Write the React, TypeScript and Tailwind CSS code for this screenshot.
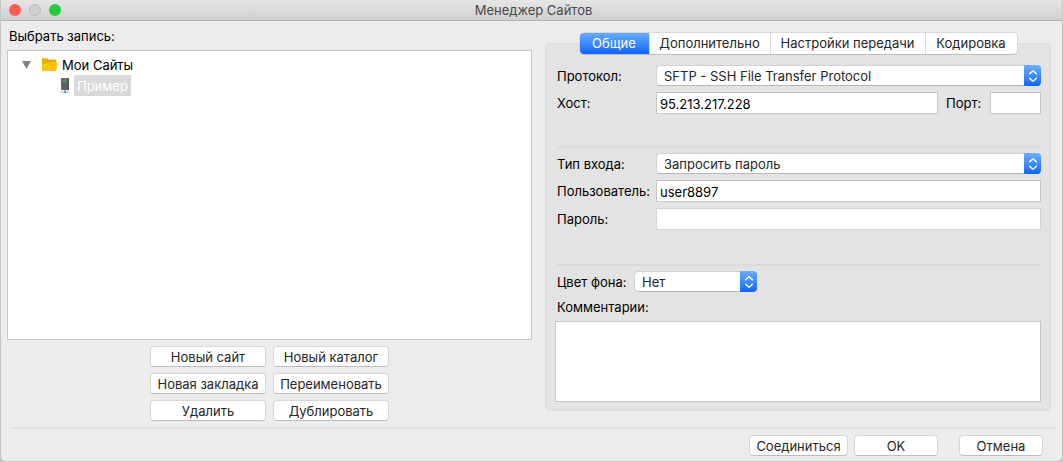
import React from "react";

const pushButton =
  "h-[21px] rounded-[4px] bg-white text-center text-[13px] leading-[20px] text-[#262626] border border-[#d6d6d6] border-b-[#bcbcbc] whitespace-nowrap";

const textField =
  "h-[22px] min-w-0 border bg-white px-[3px] pt-[2px] text-[13px] leading-[18px] text-black outline-none";

function Chevrons() {
  return (
    <span className="pointer-events-none absolute inset-y-0 right-0 flex w-[17px] items-center justify-center rounded-r-[4px] bg-linear-to-b from-[#6cadfb] to-[#0a64fb]">
      <svg width="10" height="16" viewBox="0 0 10 16" fill="none" stroke="white" strokeWidth="1.5" strokeLinecap="round" strokeLinejoin="round">
        <path d="M1.6 5.7 5 2.7l3.400 3" />
        <path d="M1.6 10.3 5 13.3l3.400-3" />
      </svg>
    </span>
  );
}

function Popup({ id, options, className }: { id: string; options: string[]; className: string }) {
  return (
    <div className={`relative h-[21px] ${className}`}>
      <select
        id={id}
        className="block h-[21px] w-full appearance-none rounded-[4px] border border-[#d2d2d2] border-b-[#b8b8b8] bg-white pl-[7px] pr-5 pt-[2px] text-[13px] leading-[17px] text-[#262626] outline-none"
      >
        {options.map((o) => (
          <option key={o}>{o}</option>
        ))}
      </select>
      <Chevrons />
    </div>
  );
}

function FieldLabel({ htmlFor, children }: { htmlFor: string; children: React.ReactNode }) {
  return (
    <label htmlFor={htmlFor} className="w-[99px] shrink-0 whitespace-nowrap">
      {children}
    </label>
  );
}

function FolderIcon() {
  return (
    <svg width="16" height="14" viewBox="0 0 16 14" className="shrink-0">
      <path d="M0 1.4C0 .7.4.3 1 .3h4.200l1.400 1.300h6.600c.7 0 1 .4 1 1V12H0z" fill="#e9ab05" />
      <path d="M6.500 5.600 7.800 4.400h7.300c.7 0 1 .4.8 1L14.300 12c-.2.6-.5.9-1.200.9H1c-.7 0-1-.3-1-1V6.600c0-.6.3-1 1-1z" fill="#fec50b" />
    </svg>
  );
}

function ServerIcon() {
  return (
    <svg width="8" height="16" viewBox="0 0 8 16" className="shrink-0">
      <rect x="0" y="0" width="8" height="12" fill="#626466" />
      <rect x="6.500" y="0" width="1.500" height="12" fill="#505254" />
      <rect x="2" y="1.500" width="3" height="2.500" fill="#2fae45" />
      <rect x="1.500" y="6" width="4" height="1" fill="#505254" />
      <rect x="1.500" y="8" width="4" height="1" fill="#505254" />
      <rect x="3.300" y="12" width="1.400" height="2" fill="#8aa5b8" />
      <rect x="0" y="13.500" width="8" height="1" fill="#9fb4c3" />
      <circle cx="4" cy="14" r="1.200" fill="#4b9bd3" />
    </svg>
  );
}

const tabs = [
  { name: "Общие", width: "w-[69px]" },
  { name: "Дополнительно", width: "w-[121px]" },
  { name: "Настройки передачи", width: "w-[155px]" },
  { name: "Кодировка", width: "w-[92px]" },
];

const siteActions = ["Новый сайт", "Новый каталог", "Новая закладка", "Переименовать", "Удалить", "Дублировать"];

export default function App() {
  return (
    <div className="min-h-screen bg-[#c4c4c4] pb-px pl-px pr-px font-['Inter','Liberation_Sans',sans-serif] text-[13px] leading-5 text-black">
      <div className="overflow-hidden rounded-b-[5px] bg-[#ececec]">
        <header className="grid h-[21px] grid-cols-[1fr_auto_1fr] items-center border-b border-[#b5b5b5] bg-linear-to-b from-[#e6e6e6] to-[#d0d0d0] pl-2 pr-1">
          <div className="flex gap-2">
            <button type="button" aria-label="Закрыть" className="size-3 rounded-full bg-[#fd5b54]" />
            <button type="button" aria-label="Свернуть" className="size-3 rounded-full border border-[#bdbdbd] bg-[#cfcfcf]" />
            <button type="button" aria-label="Развернуть" className="size-3 rounded-full bg-[#29c83f]" />
          </div>
          <h1 className="text-[#484848]">Менеджер Сайтов</h1>
        </header>

        <main className="flex gap-[13px] pl-[6px] pr-[11px]">
          <section className="flex flex-[525] flex-col pt-[5px]">
            <h2 className="pl-[2px]">Выбрать запись:</h2>
            <div role="tree" className="mt-1 flex-1 border border-[#c8c8c8] bg-white pt-1">
              <div role="treeitem" aria-expanded="true" className="flex h-[20px] items-center pl-[14px]">
                <svg width="9" height="8" viewBox="0 0 9 8" className="mr-[11px] shrink-0">
                  <path d="M0 0h9L4.500 8z" fill="#828282" />
                </svg>
                <FolderIcon />
                <span className="pl-1">Мои Сайты</span>
              </div>
              <div role="treeitem" aria-selected="true" className="flex items-center pl-[53px]">
                <ServerIcon />
                <span className="ml-[5px] h-[21px] bg-[#d9d9d9] px-[3px] leading-[22px] text-white">Пример</span>
              </div>
            </div>
            <div className="mt-[6px] grid grid-cols-[116px_116px] justify-center gap-x-[7px] gap-y-[6px]">
              {siteActions.map((a) => (
                <button key={a} type="button" className={pushButton}>
                  {a}
                </button>
              ))}
            </div>
          </section>

          <section className="flex flex-[506] flex-col pb-[10px] pt-3">
            <div role="tablist" className="z-10 flex h-[21px] self-center rounded-[4px] bg-white shadow-[0_1px_0_#bdbdbd,0_0_0_1px_#d8d8d8]">
              {tabs.map((t, i) => (
                <button
                  key={t.name}
                  type="button"
                  role="tab"
                  aria-selected={i === 0}
                  className={`h-[21px] whitespace-nowrap text-center leading-[21px] ${t.width} ${
                    i === 0
                      ? "rounded-l-[4px] bg-linear-to-b from-[#67aafb] to-[#0a64fb] text-white"
                      : "border-l border-[#dcdcdc] text-[#262626]"
                  }`}
                >
                  {t.name}
                </button>
              ))}
            </div>
            <div role="tabpanel" className="-mt-[11px] rounded-[4px] border border-[#dddddd] bg-[#e3e3e3] px-[9px] pb-2 pt-[21px]">
              <div className="flex items-center pl-[2px]">
                <FieldLabel htmlFor="protocol">Протокол:</FieldLabel>
                <Popup id="protocol" className="flex-1" options={["SFTP - SSH File Transfer Protocol"]} />
              </div>
              <div className="mt-[6px] flex items-center pl-[2px]">
                <FieldLabel htmlFor="host">Хост:</FieldLabel>
                <input id="host" type="text" defaultValue="95.213.217.228" className={`flex-1 border-[#c6c6c6] ${textField}`} />
                <label htmlFor="port" className="w-[52px] pl-2">
                  Порт:
                </label>
                <input id="port" type="text" className={`w-[51px] border-[#c6c6c6] ${textField}`} />
              </div>
              <hr className="ml-[2px] mr-px mt-8 border-t-2 border-[#dadada]" />
              <div className="mt-[5px] flex items-center pl-[2px]">
                <FieldLabel htmlFor="logon">Тип входа:</FieldLabel>
                <Popup id="logon" className="flex-1" options={["Запросить пароль"]} />
              </div>
              <div className="mt-[6px] flex items-center pl-[2px]">
                <FieldLabel htmlFor="user">Пользователь:</FieldLabel>
                <input id="user" type="text" defaultValue="user8897" className={`flex-1 border-[#c6c6c6] ${textField}`} />
              </div>
              <div className="mt-[6px] flex items-center pl-[2px]">
                <FieldLabel htmlFor="password">Пароль:</FieldLabel>
                <input id="password" type="password" className={`flex-1 border-[#d4d4d4] ${textField}`} />
              </div>
              <hr className="ml-[2px] mr-px mt-[34px] border-t-2 border-[#dadada]" />
              <div className="mt-[5px] flex items-center pl-[2px]">
                <label htmlFor="color" className="w-[77px] whitespace-nowrap">
                  Цвет фона:
                </label>
                <Popup id="color" className="w-[123px]" options={["Нет"]} />
              </div>
              <label htmlFor="comments" className="mt-[5px] block pl-[2px]">
                Комментарии:
              </label>
              <textarea
                id="comments"
                className="mt-1 block h-[81px] w-full resize-none border border-[#c6c6c6] bg-white p-1 outline-none"
              />
            </div>
          </section>
        </main>

        <footer className="mt-[6px] pb-[5px] pl-[9px] pr-[7px]">
          <hr className="border-t-2 border-[#e1e1e1]" />
          <div className="mt-[6px] flex justify-end gap-[6px] pr-3">
            <button type="button" className={`w-[99px] ${pushButton}`}>
              Соединиться
            </button>
            <button type="button" className={`w-[84px] ${pushButton}`}>
              OK
            </button>
            <button type="button" className={`ml-[15px] w-[84px] ${pushButton}`}>
              Отмена
            </button>
          </div>
        </footer>
      </div>
    </div>
  );
}
